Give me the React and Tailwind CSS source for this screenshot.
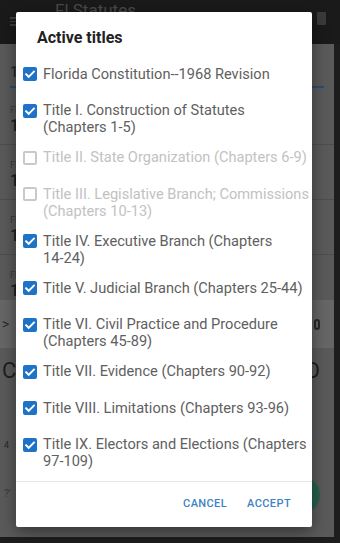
import React from "react";

const items = [
  { lines: ["Florida Constitution--1968 Revision"], checked: true },
  { lines: ["Title I. Construction of Statutes", "(Chapters 1-5)"], checked: true },
  { lines: ["Title II. State Organization (Chapters 6-9)"], checked: false },
  { lines: ["Title III. Legislative Branch; Commissions", "(Chapters 10-13)"], checked: false },
  { lines: ["Title IV. Executive Branch (Chapters", "14-24)"], checked: true },
  { lines: ["Title V. Judicial Branch (Chapters 25-44)"], checked: true },
  { lines: ["Title VI. Civil Practice and Procedure", "(Chapters 45-89)"], checked: true },
  { lines: ["Title VII. Evidence (Chapters 90-92)"], checked: true },
  { lines: ["Title VIII. Limitations (Chapters 93-96)"], checked: true },
  { lines: ["Title IX. Electors and Elections (Chapters", "97-109)"], checked: true },
];

function Box({ checked }) {
  if (checked) {
    return (
      <svg width="14" height="14" viewBox="0 0 14 14" className="block">
        <rect x="0" y="0" width="14" height="14" rx="2" fill="#1f73c7" />
        <path d="M3.1 7.3 L5.7 9.8 L10.9 4.5" fill="none" stroke="#ffffff" strokeWidth="1.9" strokeLinecap="square" />
      </svg>
    );
  }
  return <div className="w-[14px] h-[14px] rounded-[2px] border-2 border-[#c9c9c9]" />;
}

function Row({ item }) {
  return (
    <div className="flex items-start min-h-[36.5px] pt-[6px] pb-[7px] pl-[7px]">
      <div className="h-[17px] flex items-center shrink-0">
        <Box checked={item.checked} />
      </div>
      <div
        className={
          "ml-[6px] text-[14.6px] leading-[17px] whitespace-nowrap " +
          (item.checked ? "text-[#606060]" : "text-[#c2c2c2]")
        }
      >
        {item.lines.map((l, i) => (
          <div key={i}>{l}</div>
        ))}
      </div>
    </div>
  );
}

function BgRow() {
  return (
    <div className="h-[55px] border-b border-[#4e4e4e] px-[10px] pt-[14px] flex flex-col">
      <span className="text-[9px] leading-[12px] text-[#3a3a3a]">Fl</span>
      <span className="text-[16px] leading-[20px] text-[#1e1e1e] font-medium">1</span>
    </div>
  );
}

export default function App() {
  return (
    <div
      className="relative w-[340px] h-[543px] overflow-hidden bg-[#1d1d1d]"
      style={{ fontFamily: "Roboto, 'Noto Sans', sans-serif" }}
    >
      {/* background app (dimmed) */}
      <div className="h-[44px] bg-[#1a1a1a] flex items-start relative">
        <div className="ml-[10px] mt-[17px] flex flex-col gap-[2px]">
          <div className="w-[6px] h-[1.5px] bg-[#3c3c3c]" />
          <div className="w-[6px] h-[1.5px] bg-[#3c3c3c]" />
          <div className="w-[6px] h-[1.5px] bg-[#3c3c3c]" />
        </div>
        <span className="ml-[39px] text-[17px] leading-[20px] text-[#4a4a4a]">Fl Statutes</span>
        <div className="ml-auto mr-[14px] mt-[12px] w-[9px] h-[13px] bg-[#3a3a3a] rounded-[1px]" />
      </div>
      <div className="w-[334px] h-[493px] bg-[#5a5a5a] flex flex-col">
        <div className="h-[46px] px-[10px] flex flex-col justify-end">
          <span className="text-[15px] leading-[20px] text-[#202020]">1</span>
          <div className="mt-[4px] h-[2px] bg-[#2a4d78] mb-[2px]" />
        </div>
        <BgRow />
        <BgRow />
        <BgRow />
        <BgRow />
        <div className="h-[48px] bg-[#666666] flex items-center justify-between px-[2px] mt-[-10px]">
          <span className="text-[14px] text-[#2a2a2a]">&gt;</span>
          <div className="mr-[12px] w-[6px] h-[11px] rounded-full border-2 border-[#2a2a2a]" />
        </div>
        <div className="h-[44px] flex items-center justify-between px-[2px] relative">
          <span className="text-[22px] text-[#1e1e1e]">C</span>
          <span className="mr-[12px] text-[22px] text-[#1e1e1e]">O</span>
        </div>
        <div className="h-[60px] flex items-end justify-between px-[4px]">
          <span className="text-[9px] text-[#262626]">4</span>
          <div className="mr-[18px] w-[4px] h-[20px] bg-[#141414] mb-[8px]" />
        </div>
        <div className="flex-1 flex items-center justify-between px-[4px]">
          <span className="text-[11px] text-[#3a3a3a]">?'</span>
          <div className="mr-[10px] w-[36px] h-[36px] rounded-full bg-[#26604a]" />
        </div>
      </div>

      {/* dialog */}
      <div className="absolute left-[16px] top-[12px] w-[296px] h-[515px] bg-white rounded-[2px] shadow-[0_4px_16px_rgba(0,0,0,0.45)] flex flex-col overflow-hidden">
        <div className="pt-[16px] pl-[21px] h-[36px] text-[16px] leading-[20px] font-bold text-[#222222]">
          Active titles
        </div>
        <div className="mt-[11.5px] flex-1">
          {items.map((it, i) => (
            <Row key={i} item={it} />
          ))}
        </div>
        <div className="h-px bg-[#e6e6e6]" />
        <div className="h-[45px] flex items-center justify-end pr-[21px] gap-[20px] text-[11px] font-medium tracking-[0.4px] text-[#3d83c6]">
          <span>CANCEL</span>
          <span>ACCEPT</span>
        </div>
      </div>
    </div>
  );
}
